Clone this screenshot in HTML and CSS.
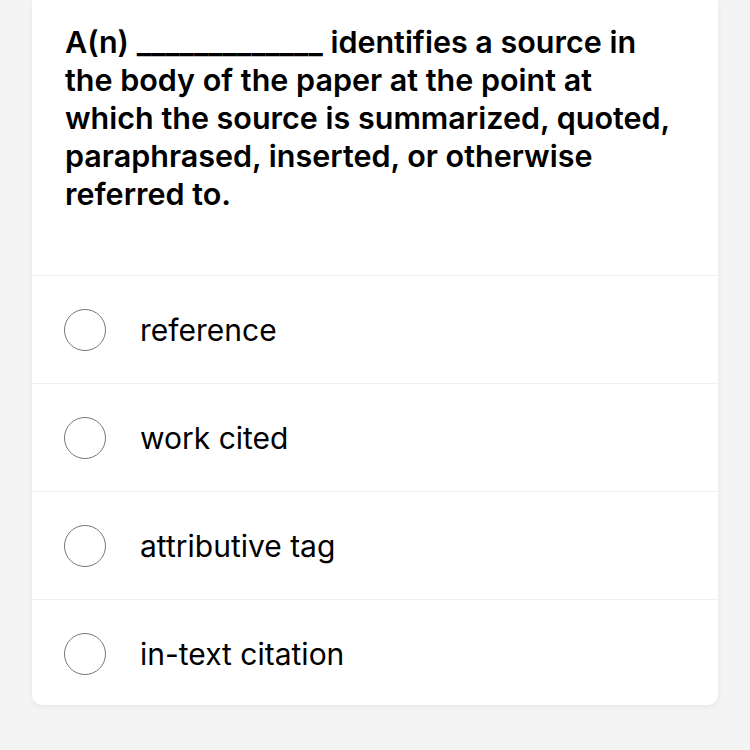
FILE: index.html
```html
<!DOCTYPE html>
<html>
<head>
<meta charset="utf-8">
<link rel="stylesheet" href="styles.css">
</head>
<body>
<div class="card">
  <div class="question">A(n) _____________ identifies a source in the body of the paper at the point at which the source is summarized, quoted, paraphrased, inserted, or otherwise referred to.</div>
  <div class="option"><span class="radio"></span><span class="label">reference</span></div>
  <div class="option"><span class="radio"></span><span class="label">work cited</span></div>
  <div class="option"><span class="radio"></span><span class="label">attributive tag</span></div>
  <div class="option"><span class="radio"></span><span class="label">in-text citation</span></div>
</div>
</body>
</html>
```

FILE: styles.css
```css
html, body {
  margin: 0;
  padding: 0;
  background: #f4f4f4;
  width: 750px;
  height: 750px;
  overflow: hidden;
}
.card {
  margin-left: 32px;
  width: 686px;
  height: 705px;
  background: #fff;
  border-radius: 0 0 10px 10px;
  box-shadow: 0 2px 6px rgba(0,0,0,0.06);
  box-sizing: border-box;
}
.question {
  font-family: Inter, "Liberation Sans", sans-serif;
  font-weight: 600;
  font-size: 30.5px;
  line-height: 38px;
  letter-spacing: 0;
  color: #000;
  padding: 23px 34px 0 33px;
  height: 276px;
  box-sizing: border-box;
  border-bottom: 1px solid #f0f0f0;
}
.option {
  display: flex;
  align-items: center;
  height: 108px;
  box-sizing: border-box;
  padding-left: 32px;
  border-bottom: 1px solid #f0f0f0;
}
.option:last-child {
  border-bottom: none;
}
.radio {
  width: 40px;
  height: 40px;
  border: 1.5px solid #777;
  border-radius: 50%;
  flex: none;
}
.label {
  margin-left: 34px;
  font-family: Inter, "Liberation Sans", sans-serif;
  font-size: 30px;
  color: #000;
}
```
